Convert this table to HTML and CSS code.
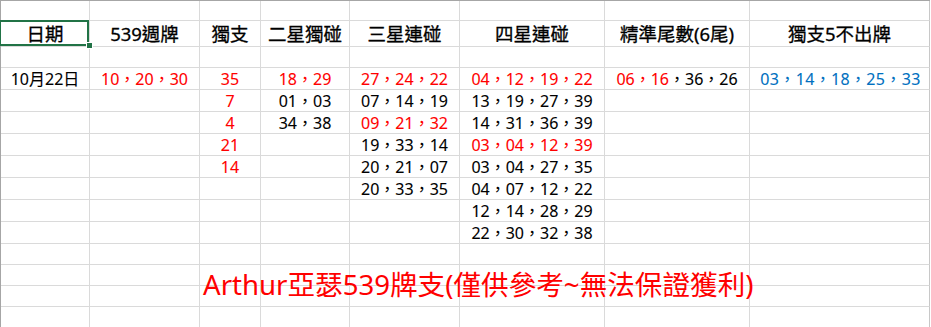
FILE: index.html
```html
<!DOCTYPE html>
<html lang="zh-Hant">
<head>
<meta charset="utf-8">
<title>539</title>
<link rel="stylesheet" href="styles.css">
</head>
<body>
<div class="sheet">
  <!-- row 1 -->
  <div class="c"></div><div class="c"></div><div class="c"></div><div class="c"></div><div class="c"></div><div class="c"></div><div class="c"></div><div class="c"></div>
  <!-- row 2 header -->
  <div class="c h sel">日期<span class="handle"></span></div>
  <div class="c h">539週牌</div>
  <div class="c h">獨支</div>
  <div class="c h">二星獨碰</div>
  <div class="c h">三星連碰</div>
  <div class="c h">四星連碰</div>
  <div class="c h">精準尾數(6尾)</div>
  <div class="c h">獨支5不出牌</div>
  <!-- row 3 -->
  <div class="c"></div><div class="c"></div><div class="c"></div><div class="c"></div><div class="c"></div><div class="c"></div><div class="c"></div><div class="c"></div>
  <!-- row 4 -->
  <div class="c d">10月22日</div>
  <div class="c d r">10，20，30</div>
  <div class="c d r">35</div>
  <div class="c d r">18，29</div>
  <div class="c d r">27，24，22</div>
  <div class="c d r">04，12，19，22</div>
  <div class="c d"><span class="r">06，16</span>，36，26</div>
  <div class="c d b wide">03，14，18，25，33</div>
  <!-- row 5 -->
  <div class="c"></div><div class="c"></div>
  <div class="c d r">7</div>
  <div class="c d">01，03</div>
  <div class="c d">07，14，19</div>
  <div class="c d">13，19，27，39</div>
  <div class="c"></div><div class="c"></div>
  <!-- row 6 -->
  <div class="c"></div><div class="c"></div>
  <div class="c d r">4</div>
  <div class="c d">34，38</div>
  <div class="c d r">09，21，32</div>
  <div class="c d">14，31，36，39</div>
  <div class="c"></div><div class="c"></div>
  <!-- row 7 -->
  <div class="c"></div><div class="c"></div>
  <div class="c d r">21</div>
  <div class="c"></div>
  <div class="c d">19，33，14</div>
  <div class="c d r">03，04，12，39</div>
  <div class="c"></div><div class="c"></div>
  <!-- row 8 -->
  <div class="c"></div><div class="c"></div>
  <div class="c d r">14</div>
  <div class="c"></div>
  <div class="c d">20，21，07</div>
  <div class="c d">03，04，27，35</div>
  <div class="c"></div><div class="c"></div>
  <!-- row 9 -->
  <div class="c"></div><div class="c"></div><div class="c"></div><div class="c"></div>
  <div class="c d">20，33，35</div>
  <div class="c d">04，07，12，22</div>
  <div class="c"></div><div class="c"></div>
  <!-- row 10 -->
  <div class="c"></div><div class="c"></div><div class="c"></div><div class="c"></div><div class="c"></div>
  <div class="c d">12，14，28，29</div>
  <div class="c"></div><div class="c"></div>
  <!-- row 11 -->
  <div class="c"></div><div class="c"></div><div class="c"></div><div class="c"></div><div class="c"></div>
  <div class="c d">22，30，32，38</div>
  <div class="c"></div><div class="c"></div>
  <!-- row 12 -->
  <div class="c"></div><div class="c"></div><div class="c"></div><div class="c"></div><div class="c"></div><div class="c"></div><div class="c"></div><div class="c"></div>
  <!-- row 13 -->
  <div class="c"></div><div class="c"></div>
  <div class="c note"><span class="note-text">Arthur亞瑟539牌支(僅供參考~無法保證獲利)</span></div>
  <div class="c"></div><div class="c"></div><div class="c"></div><div class="c"></div><div class="c"></div>
  <!-- row 14 -->
  <div class="c"></div><div class="c"></div><div class="c"></div><div class="c"></div><div class="c"></div><div class="c"></div><div class="c"></div><div class="c"></div>
  <!-- row 15 -->
  <div class="c"></div><div class="c"></div><div class="c"></div><div class="c"></div><div class="c"></div><div class="c"></div><div class="c"></div><div class="c"></div>
</div>
</body>
</html>
```
FILE: styles.css
```css
html, body {
  margin: 0;
  padding: 0;
  background: #ffffff;
  overflow: hidden;
}

body {
  font-family: "Noto Sans", "Noto Sans CJK TC", sans-serif;
  color: #000000;
}

.sheet {
  display: grid;
  grid-template-columns: 89px 110px 61px 89px 110px 145px 145px 180px;
  grid-template-rows: 20px 26px 21px repeat(8, 22px) 21px 21px 21px 21px;
  border-top: 1px solid #a6a6a6;
  border-left: 1px solid #a6a6a6;
  width: 930px;
  box-sizing: border-box;
}

.c {
  box-sizing: border-box;
  border-right: 1px solid #dadada;
  border-bottom: 1px solid #dadada;
  display: flex;
  align-items: center;
  justify-content: center;
  white-space: nowrap;
  min-width: 0;
}

.c:nth-child(8n) {
  border-right-color: #c8c8c8;
}

.h {
  font-size: 18.5px;
  line-height: 1;
  font-weight: 400;
  -webkit-text-stroke: 0.3px #000000;
  padding-top: 1px;
}

.d {
  font-size: 16px;
  line-height: 1;
  padding-top: 1px;
  -webkit-text-stroke: 0.1px currentColor;
}

.wide {
  letter-spacing: 0.35px;
  padding-left: 2px;
}

.r { color: #ff0000; }
.b { color: #0070c0; }

.sel {
  position: relative;
}

.sel::before {
  content: "";
  position: absolute;
  left: -2px;
  top: -1px;
  right: 0;
  bottom: 0;
  border: 2px solid #217346;
}

.handle {
  position: absolute;
  right: -4px;
  bottom: -3px;
  width: 5px;
  height: 5px;
  background: #217346;
  border: 1px solid #ffffff;
  z-index: 2;
}

.note {
  justify-content: flex-start;
  align-items: flex-start;
  overflow: visible;
  position: relative;
}

.note-text {
  position: absolute;
  left: 3px;
  top: 6px;
  font-size: 27.6px;
  line-height: 1;
  color: #ff0000;
  z-index: 1;
}
```
